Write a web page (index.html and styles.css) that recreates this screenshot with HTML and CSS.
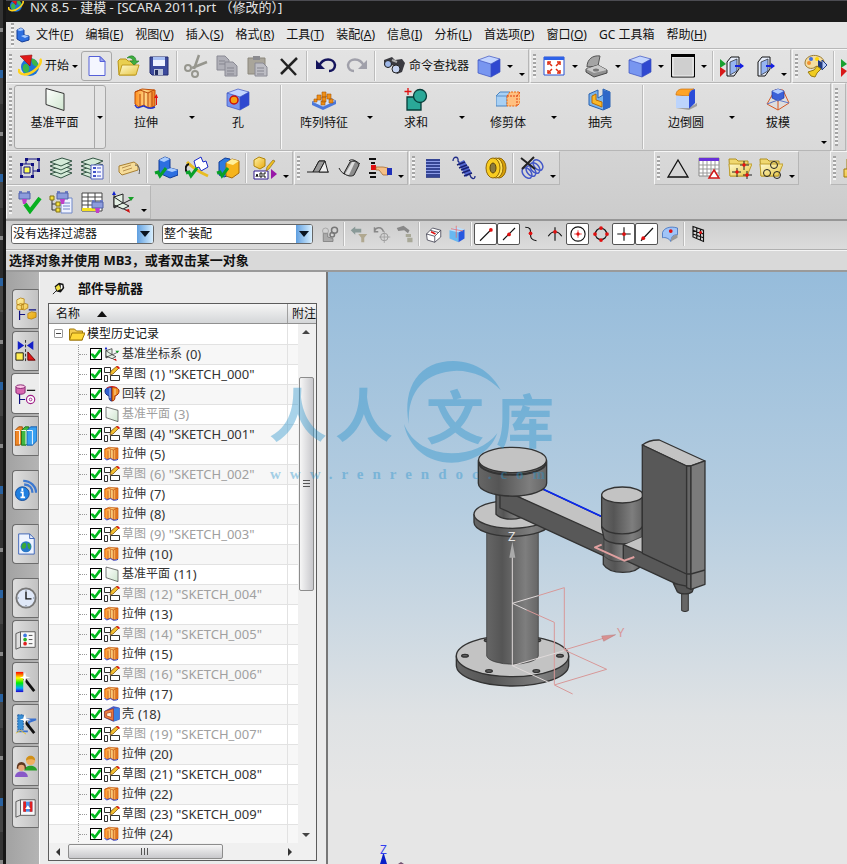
FILE: index.html
```html
<!DOCTYPE html>
<html lang="zh-CN">
<head>
    <meta charset="UTF-8">
    <meta name="viewport" content="width=device-width, initial-scale=1.0">
    <title>NX 8.5 - 建模</title>
    <link rel="stylesheet" href="styles.css">
</head>
<body>
    <!-- Icon set -->
    <svg class="sprite" aria-hidden="true">
        <defs>
            <linearGradient id="gGold" x1="0" y1="0" x2="1" y2="1"><stop offset="0" stop-color="#fff3a8"/><stop offset="1" stop-color="#e8a80c"/></linearGradient>
            <linearGradient id="gFolder" x1="0" y1="0" x2="1" y2="1"><stop offset="0" stop-color="#fffbd0"/><stop offset="1" stop-color="#e6c440"/></linearGradient>
            <linearGradient id="gOrange" x1="0" y1="0" x2="1" y2="0"><stop offset="0" stop-color="#ff8c1a"/><stop offset=".5" stop-color="#ffd98a"/><stop offset="1" stop-color="#f07818"/></linearGradient>
            <linearGradient id="gPlane" x1="0" y1="0" x2="1" y2="1"><stop offset="0" stop-color="#fff"/><stop offset="1" stop-color="#cfe6cf"/></linearGradient>
            <linearGradient id="gMetal" x1="0" y1="0" x2="1" y2="0"><stop offset="0" stop-color="#666"/><stop offset=".3" stop-color="#555"/><stop offset=".75" stop-color="#7e7e7e"/><stop offset="1" stop-color="#666"/></linearGradient>
            <linearGradient id="gRain" x1="0" y1="0" x2="0" y2="1"><stop offset="0" stop-color="#f00"/><stop offset=".3" stop-color="#ff0"/><stop offset=".55" stop-color="#0e0"/><stop offset=".8" stop-color="#0af"/><stop offset="1" stop-color="#20c"/></linearGradient>
        </defs>
        <symbol id="nx" viewBox="0 0 24 24"><circle cx="12" cy="13" r="9" fill="#1d74d8"/><path d="M5 12c2-4 5-2 6 1s-1 6-3 6-4-4-3-7zM13 5c4-1 7 3 7 7-3 1-5-1-6-3z" fill="#3cb648"/><path d="M1 15c-1 7 9 7 16 1 5-4 7-9 5-11" fill="none" stroke="#ffd21c" stroke-width="2.500"/><path d="M2 2l12-1-2 11z" fill="#e01818" stroke="#901010" stroke-width=".6"/></symbol>
        <symbol id="part" viewBox="0 0 16 16"><path d="M2 3l4-2 3 2v5l5 1v4l-7 2-5-3z" fill="#2d6fe0" stroke="#123c98"/><path d="M2 3l3 1 4-1-3-2zM6 9l3-1 5 1-4 2z" fill="#a8ccff"/></symbol>
        <symbol id="new" viewBox="0 0 24 24"><path d="M4 2.500h11l5 5v14H4z" fill="#f4f6ff" stroke="#5560d8"/><path d="M15 2.500v5h5z" fill="#9aa4f0" stroke="#5560d8"/></symbol>
        <symbol id="open" viewBox="0 0 24 24"><path d="M2 7l2-2h6l2 2h7v14H3z" fill="#e9cf50" stroke="#b89418"/><path d="M6 11h17l-3 10H3z" fill="url(#gFolder)" stroke="#c09c20"/><path d="M11 4c4-4 9-2 9 3h3l-5 4-4-4h3c0-2-3-4-6-3z" fill="#3fae3f" stroke="#1f7a28" stroke-width=".6"/></symbol>
        <symbol id="save" viewBox="0 0 24 24"><path d="M3 3h18v18H5l-2-2z" fill="#3c4a9c" stroke="#222c70"/><path d="M6 3h12v9H6z" fill="#eef2ff"/><path d="M6 3h12v3H6z" fill="#a8c0f4"/><path d="M7 15h9v6H7z" fill="#b9c2d8"/><path d="M8 16h3v5H8z" fill="#222c60"/></symbol>
        <symbol id="cut" viewBox="0 0 24 24"><g fill="none" stroke="#96968e" stroke-width="2.500"><path d="M15 1l-5 14M23 8L8 14"/><circle cx="4" cy="14" r="3" stroke-width="2"/><circle cx="11" cy="20" r="3" stroke-width="2"/></g></symbol>
        <symbol id="copy" viewBox="0 0 24 24"><g fill="#b0b0b8" stroke="#8a8a94"><path d="M2 2h8l4 4v10H2z"/><path d="M10 8h8l4 4v10H10z"/></g><path d="M4 7h6M4 10h6M12 14h7M12 17h7M12 20h7" stroke="#85858f"/></symbol>
        <symbol id="paste" viewBox="0 0 24 24"><path d="M2 4h17v16H2z" fill="#a9a59a" stroke="#8c887c"/><path d="M7 2h7v4H7z" fill="#8b8b90"/><path d="M9 9h8l4 4v9H9z" fill="#bdbdc4" stroke="#8a8a94"/><path d="M11 14h7M11 17h7M11 20h7" stroke="#85858f"/></symbol>
        <symbol id="del" viewBox="0 0 24 24"><path d="M4 5l15 16M20 4L4 20" stroke="#222" stroke-width="2.500" fill="none"/></symbol>
        <symbol id="undo" viewBox="0 0 24 24"><path d="M5 12c4-9 15-8 16-1 0 4-3 6-6 6" fill="none" stroke="#14145c" stroke-width="2.500"/><path d="M2 6v9h9z" fill="#14145c"/></symbol>
        <symbol id="redo" viewBox="0 0 24 24"><path d="M19 12C15 3 4 4 3 11c0 4 3 6 6 6" fill="none" stroke="#a0a0aa" stroke-width="2.500"/><path d="M22 6v9h-9z" fill="#a0a0aa"/></symbol>
        <symbol id="find" viewBox="0 0 24 24"><path d="M2 6l8-3 3 3 7-1 3 4-3 9-5 2-3-4-1-5-5 3-4-3z" fill="#3a3a40"/><circle cx="6" cy="10" r="3.500" fill="#9fb8e8" stroke="#222"/><circle cx="14" cy="15" r="4" fill="#c4d2f0" stroke="#222"/><path d="M10 6l5 2" stroke="#aaa" stroke-width="2"/></symbol>
        <symbol id="cube" viewBox="0 0 24 24"><path d="M1 6l11-4 11 3-9 5z" fill="#c3d5ff"/><path d="M1 6l13 4v13L1 19z" fill="#7896f0"/><path d="M14 10l9-5v13l-9 5z" fill="#2f48d0"/><path d="M1 6l11-4 11 3v13l-9 5-13-4zM1 6l13 4 9-5M14 10v13" fill="none" stroke="#3a50c0" stroke-width=".7"/></symbol>
        <symbol id="fit" viewBox="0 0 24 24"><path d="M2 3h20v18H2z" fill="#fff" stroke="#2850d0"/><path d="M2 3h20v3H2z" fill="#2e62e8"/><g stroke="#e02c10" stroke-width="1.500" fill="none"><path d="M6 8l4 4M18 8l-4 4M6 19l4-4M18 19l-4-4"/><path d="M6 11V8h3M15 8h3v3M6 16v3h3M15 19h3v-3"/></g></symbol>
        <symbol id="view" viewBox="0 0 24 24"><path d="M2 13C2 5 8 1 15 2l-2 10z" fill="#a4a4a4" stroke="#555"/><path d="M1 15l12-4 9 5v3l-13 4-8-5z" fill="#909090" stroke="#484848"/><path d="M1 15l12-4 9 5-13 3z" fill="#c9c9c9"/><ellipse cx="11" cy="16" rx="3" ry="1.500" fill="#777"/></symbol>
        <symbol id="square" viewBox="0 0 24 24"><path d="M.500 1h23v22H.500z" fill="#cfcfcf" stroke="#000"/><path d="M2 3h20v19H2z" fill="none" stroke="#fff" stroke-width=".7"/><path d="M0 0h24v3H0z"/></symbol>
        <symbol id="clip" viewBox="0 0 24 24"><path d="M7 8l4-5h8v12l-5 7H7z" fill="#e7eefc" stroke="#111"/><path d="M10 8l7-3v12l-7 4z" fill="#96b4f0" stroke="#222" stroke-width=".7"/><path d="M15 12h8" stroke="#1420e0" stroke-width="2"/><path d="M20 9l4 3-4 3z" fill="#1420e0"/></symbol>
        <symbol id="clipmark" viewBox="0 0 24 24"><path d="M0 5l6 5-6 4z" fill="#18a030"/><path d="M0 13l6 4-6 6z" fill="#d81818"/></symbol>
        <symbol id="palette" viewBox="0 0 24 24"><path d="M1 9C1 3 8 0 14 2c7 2 8 9 3 11-3 1-4-2-6 0-3 3-10 1-10-4z" fill="#f4dda0" stroke="#9a7b30"/><circle cx="7" cy="5" r="2" fill="#3f70e0"/><circle cx="13" cy="5" r="2" fill="#ffd800"/><circle cx="5" cy="9" r="2" fill="#f09030"/><path d="M14 6l5 3v5l-5 3z" fill="#203a80"/><path d="M18 6l5 5-5 5z" fill="#b8ccf8" stroke="#203a80"/><path d="M13 12l-3 4-6 2 3 4 4 1 2-4 4-4z" fill="#f0cc20" stroke="#9a7b10"/></symbol>
        <symbol id="plane" viewBox="0 0 24 24"><path d="M3 1.500l18 5v17l-18-6z" fill="url(#gPlane)" stroke="#333"/></symbol>
        <symbol id="extrude" viewBox="0 0 24 24"><path d="M1 5l7-3 13 1v16l-7 2-4-3-5 2-4-3z" fill="url(#gOrange)" stroke="#c05008"/><path d="M1 5l5-2 8 3 6-3M6 7v13M10 5v13M14 6v15M18 5v14" fill="none" stroke="#b84808"/><path d="M1 18c3 6 7 0 9 1s5 4 11 1" fill="none" stroke="#2436c8" stroke-width="1.500"/></symbol>
        <symbol id="uparrow" viewBox="0 0 24 24"><path d="M22.500 18V8" stroke="#e01010" fill="none"/><path d="M20 11l2.500-4L24 11z" fill="#e01010"/></symbol>
        <symbol id="hole" viewBox="0 0 24 24"><use href="#cube"/><circle cx="8" cy="13" r="4" fill="#f8a010" stroke="#c81010" stroke-width="1.500"/></symbol>
        <symbol id="pattern" viewBox="0 0 24 24"><path d="M0 15l14-6 10 5v3l-13 6-11-5z" fill="#4a78dc"/><path d="M0 15l14-6 10 5-13 6z" fill="#cfe2ff" stroke="#4a70c8" stroke-width=".7"/><g fill="#f09018" stroke="#a85808" stroke-width=".6"><path d="M10 5h4v5h-4zM5 8h4v5H5zM15 7h4v5h-4zM10 10h4v5h-4zM2 12h3v3H2zM17 12h4v4h-4zM9 14h4v4H9z"/></g></symbol>
        <symbol id="unite" viewBox="0 0 24 24"><path d="M3 10h14v13H3z" fill="#2aa898" stroke="#063c38" stroke-width="1.300"/><circle cx="16" cy="9" r="6.500" fill="#2aa898" stroke="#063c38" stroke-width="1.300"/><path d="M4 1v7M.500 4.500h7" stroke="#e01010" stroke-width="1.300"/></symbol>
        <symbol id="trim" viewBox="0 0 24 24"><path d="M0 9l4-4h10v11l-3 3H0z" fill="#a8d0f4" stroke="#4a84c0"/><path d="M0 9h11v10" fill="none" stroke="#5a90c8"/><path d="M11 9l3-4h10v11l-3 3H11z" fill="#ffc080" stroke="#e86810" stroke-dasharray="2 1"/><path d="M11 9h10v10M21 9l3-4" fill="none" stroke="#e04010" stroke-dasharray="2 1"/></symbol>
        <symbol id="shell" viewBox="0 0 24 24"><path d="M1 7l9-4v8l5-3V2l7 3v15l-7 3-14-5z" fill="#78b4ec" stroke="#2860b0"/><path d="M4 9l4-2v6l6 2v5L4 16z" fill="#f8b828" stroke="#b86a08"/><path d="M15 3l7 2v15l-7 3z" fill="#2e68c8"/></symbol>
        <symbol id="shelled" viewBox="0 0 24 24"><path d="M1 8l13-7 9 2v17l-9 3-13-6z" fill="#4a60d8" stroke="#2030a0"/><path d="M1 8l13-4v18L1 17z" fill="#f08040" stroke="#a03010"/><path d="M4 11l7-2v8l-7-2z" fill="#fff0d8" stroke="#a03010"/><path d="M15 4l8-1v17l-8 3z" fill="#3c80e0"/></symbol>
        <symbol id="blend" viewBox="0 0 24 24"><path d="M2 8c0-4 3-6 6-6h12c-4 1-5 3-5 7z" fill="#ffa428" stroke="#c87010" stroke-width=".7"/><path d="M2 9h13v12H2z" fill="#bcd4fc"/><path d="M15 9c0-4 2-6 6-7v14l-6 6z" fill="#2a4cd8"/><path d="M2 21h13l8-5v3l-8 4z" fill="#777" opacity=".6"/></symbol>
        <symbol id="draft" viewBox="0 0 24 24"><path d="M1 17L9 3h8l6 13-11 7zM12 23V12" fill="none" stroke="#d85820"/><path d="M6 4l6-2 6 2v7l-6 3-6-3z" fill="#3c62d8" stroke="#2038a0" stroke-width=".7"/><path d="M6 4l6-2 6 2-6 3z" fill="#b0ccff"/><path d="M1 17l11-4 11 3" fill="none" stroke="#6078c8"/></symbol>
        <symbol id="group" viewBox="0 0 24 24"><path d="M8 3h13v12H8z" fill="none" stroke="#101080"/><path d="M3 8h12v13H3z" fill="#d8d8d8" stroke="#101080"/><path d="M6 11h6v6H6z" fill="#ffff50" stroke="#101080"/><path d="M7 2h3v3H7zM19 2h3v3h-3zM19 13h3v3h-3zM2 7h3v3H2zM13 7h3v3h-3zM2 19h3v3H2zM13 19h3v3h-3z" fill="#101080"/></symbol>
        <symbol id="layers" viewBox="0 0 24 24"><g fill="#d4ead8" stroke="#335544"><path d="M1 18l12-4 10 3-11 5z"/><path d="M1 14l12-4 10 3-11 5z"/><path d="M1 10l12-4 10 3-11 5z"/><path d="M1 6l12-4 10 3-11 5z"/></g></symbol>
        <symbol id="layerset" viewBox="0 0 24 24"><use href="#layers"/><path d="M11 9h12v14H11z" fill="#f4f6ff" stroke="#5060b8"/><path d="M13 11h3v2h-3zM13 15h3v2h-3zM13 19h3v2h-3z" fill="#4050c8"/><path d="M17 12h4M17 16h4M17 20h4" stroke="#4050c8"/></symbol>
        <symbol id="tag" viewBox="0 0 24 24"><path d="M2 10l15-4 4 3v5L5 19l-3-3z" fill="#f6dc98" stroke="#a88034"/><path d="M5 12l9-3M6 15l9-3" stroke="#b89050"/><path d="M18 9c5 0 5 6 4 9" fill="none" stroke="#555"/></symbol>
        <symbol id="chk" viewBox="0 0 24 24"><path d="M1 17l3-1 2 4 6-8" fill="none" stroke="#08a028" stroke-width="3"/></symbol>
        <symbol id="seat" viewBox="0 0 24 24"><path d="M5 4l6-3 5 2v9l8 2v5l-8 3-11-5z" fill="#2d6fe0" stroke="#123c98"/><path d="M5 4l5 2 6-3-5-2zM12 14l5-2 7 2-6 2z" fill="#a8ccff"/></symbol>
        <symbol id="boxes" viewBox="0 0 24 24"><path d="M3 6l6-4 5 1v16l-6 2-5-2z" fill="#2d7ae0" stroke="#123c98"/><path d="M10 7l6-4 7 2v12l-7 5-6-2z" fill="#f6b41c" stroke="#a86c08"/><path d="M10 7l6-4 7 2-6 4z" fill="#fff09c"/></symbol>
        <symbol id="sweep" viewBox="0 0 24 24"><path d="M9 5l7-4 2 5 3-1 2 6-7 4-2-4-3 1z" fill="#fff" stroke="#1828c8"/><path d="M2 6c4 4 12 10 21 14" stroke="#e8bc20" stroke-width="3" fill="none"/><path d="M4 8c-4 1-4 6-2 8" fill="none" stroke="#111" stroke-width="2"/></symbol>
        <symbol id="abc" viewBox="0 0 24 24"><path d="M1 4l5-3 6 2v7l-5 3-6-3z" fill="url(#gGold)" stroke="#b08408"/><path d="M1 15h14v8H1z" fill="#fff" stroke="#301890"/><path d="M3 21l1-3 1 3M7 17v4h2v-4zM13 17h-2v4h2" fill="none" stroke="#111"/><path d="M22 5l-6 8-3 2 1-4 6-7z" fill="#f0c020" stroke="#806010" stroke-width=".6"/><path d="M18 13l6 5-6 5z" fill="#9818a8"/></symbol>
        <symbol id="surf" viewBox="0 0 24 24"><path d="M1 16h6l6-11h6l-6 11h10" fill="#ccc" stroke="#222"/><path d="M7 16l6-11h6l-6 11z" fill="#999" stroke="#222"/><path d="M13 16l6-11 3 11z" fill="#eee" stroke="#222"/></symbol>
        <symbol id="surf2" viewBox="0 0 24 24"><path d="M2 12c4 8 10 9 16 3M12 5c3-3 7 0 11 3" fill="none" stroke="#222"/><path d="M7 17l6-11c4-2 7-1 9 3l-5 10c-3 2-7 1-10-2z" fill="#8c8c8c" stroke="#222"/><path d="M8 18l7-12h3l-6 13z" fill="#ddd"/></symbol>
        <symbol id="hand" viewBox="0 0 24 24"><path d="M1 3h7M3 7h4M1 17h7M2 21h6" stroke="#111" stroke-width="2"/><path d="M3 9h5v5H3z" fill="#e01010"/><path d="M8 11h7l5 1v7h-5l-4-5H8z" fill="#f4c088" stroke="#a06020" stroke-width=".7"/><path d="M19 12h5v7h-5z" fill="#2030b8"/></symbol>
        <symbol id="spring" viewBox="0 0 24 24"><path d="M5 3h14v18H5z" fill="#8c9ce8"/><path d="M5 4h14M5 7h14M5 10h14M5 13h14M5 16h14M5 19h14M5 21h14" stroke="#182878" stroke-width="1.500"/></symbol>
        <symbol id="spring2" viewBox="0 0 24 24"><path d="M1 5c0-5 6-5 5 0l12 14c1 4 5 5 5 1" fill="none" stroke="#202c88" stroke-width="1.300"/><path d="M6 7l6-3 8 13-6 4z" fill="#5468d0"/><path d="M5 9l8-3M7 12l8-3M9 14l8-3M10 17l8-3M12 20l8-3" stroke="#182070" stroke-width="1.500"/></symbol>
        <symbol id="ring" viewBox="0 0 24 24"><ellipse cx="16" cy="12" rx="7" ry="10" fill="#d8a008" stroke="#906808"/><ellipse cx="13" cy="12" rx="7" ry="10" fill="#ffe050" stroke="#906808"/><ellipse cx="10" cy="12" rx="7" ry="10" fill="#f8cc20" stroke="#906808"/><ellipse cx="10" cy="12" rx="3" ry="5" fill="#8a7a40" stroke="#604808"/></symbol>
        <symbol id="unspring" viewBox="0 0 24 24"><g fill="none" stroke="#4458c8" stroke-width="1.500"><ellipse cx="7" cy="17" rx="4" ry="6" transform="rotate(-40 7 17)"/><ellipse cx="11" cy="15" rx="4" ry="6" transform="rotate(-40 11 15)"/><ellipse cx="15" cy="12" rx="4" ry="6" transform="rotate(-40 15 12)"/><ellipse cx="18" cy="9" rx="4" ry="6" transform="rotate(-40 18 9)"/></g><path d="M1 2l14 11M14 1L2 13" stroke="#222" stroke-width="2"/></symbol>
        <symbol id="tri" viewBox="0 0 24 24"><path d="M12 4l10 17H2z" fill="none" stroke="#111" stroke-width="1.300"/></symbol>
        <symbol id="gridtri" viewBox="0 0 24 24"><path d="M2 2h20v18H2z" fill="#fff" stroke="#888"/><path d="M2 9h20M2 13h20M2 17h20M6 5v15M10 5v15M14 5v15M18 5v15" stroke="#999"/><path d="M2 2h20v3H2z" fill="#6830d8"/><path d="M17 14l5 8H12z" fill="#fff" stroke="#d01818" stroke-width="1.500"/></symbol>
        <symbol id="folder" viewBox="0 0 24 24"><path d="M1 3h7l2 2h10v15H2z" fill="#f0d870" stroke="#b09020"/><path d="M1 8h23l-5 12H2z" fill="url(#gFolder)" stroke="#c0a030"/></symbol>
        <symbol id="folderpts" viewBox="0 0 24 24"><use href="#folder"/><path d="M16 5v9M12 9h9M9 12v9M4 16h9M19 15v8M15 19h9" stroke="#222"/><g fill="#f01010"><circle cx="16" cy="9" r="1.700"/><circle cx="9" cy="16" r="1.700"/><circle cx="19" cy="19" r="1.700"/></g></symbol>
        <symbol id="foldercir" viewBox="0 0 24 24"><use href="#folder"/><g fill="none" stroke="#222"><circle cx="15" cy="9" r="3.500"/><circle cx="8" cy="17" r="3.500"/><circle cx="18" cy="19" r="3.500"/></g></symbol>
        <symbol id="goldpart" viewBox="0 0 24 24"><path d="M5 3h10v9h6v9H2v-8h3z" fill="url(#gGold)" stroke="#a07808"/></symbol>
        <symbol id="plug" viewBox="0 0 24 24"><path d="M1 1h3v4H1zM9 1h3v4H9z" fill="#7080c8"/><path d="M1 3h11v6H1z" fill="#8c9cdc" stroke="#5060a8"/><path d="M4 9h5l-1 5H5z" fill="#c040c8"/></symbol>
        <symbol id="plugok" viewBox="0 0 24 24"><use href="#plug"/><path d="M7 14l5 7L22 8" fill="none" stroke="#08b020" stroke-width="4"/></symbol>
        <symbol id="plugtree" viewBox="0 0 24 24"><path d="M12 8h11v15H12z" fill="#eef2ff" stroke="#7088c8"/><path d="M14 13h7M14 16h7M14 19h7" stroke="#7088c8"/><use href="#plug" x="7"/><path d="M3 8v12h5M3 14h5" fill="none" stroke="#333"/><path d="M1 6h4v4H1zM7 12h4v4H7zM7 18h4v4H7z" fill="#f4e040" stroke="#807010"/></symbol>
        <symbol id="plugtable" viewBox="0 0 24 24"><path d="M2 3h20v18H2z" fill="#fff" stroke="#444"/><path d="M2 18h14v3H2z" fill="#f4e020"/><path d="M2 7h20M2 11h20M2 15h20M8 3v15M15 3v12" stroke="#444"/><use href="#plug" x="11" y="9"/></symbol>
        <symbol id="csys" viewBox="0 0 24 24"><path d="M3 3v15M3 18l18-9M3 14l14 7" fill="none" stroke="#222"/><path d="M3 7l9-3v9l-9 4zM3 7l9 6 6 3-6 3-9-4" fill="#e4f0e4" stroke="#222"/><path d="M1 5l2-4 2 4z" fill="#1020d0"/><path d="M17 7h6l-3 4z" fill="#18a028"/><path d="M14 20l4-1 1 4z" fill="#d01010"/></symbol>
        <symbol id="links" viewBox="0 0 24 24"><g fill="#aaa" stroke="#777"><path d="M3 11h6v5l7 2v4H3z"/><circle cx="18" cy="7" r="4" fill="none" stroke-width="2"/><circle cx="15" cy="13" r="3" fill="none" stroke-width="2"/></g><circle cx="6" cy="8" r="4" fill="none" stroke="#999"/></symbol>
        <symbol id="filterback" viewBox="0 0 24 24"><path d="M1 7l6-5v3h8v5H7v3z" fill="#8a9a98"/><path d="M11 12h12l-4 5v6h-4v-6z" fill="#b0a890"/></symbol>
        <symbol id="target" viewBox="0 0 24 24"><path d="M2 8c2-6 10-6 12 1M2 3v6h5" fill="none" stroke="#888" stroke-width="2"/><circle cx="15" cy="16" r="5" fill="none" stroke="#888"/><path d="M15 8v16M8 16h15" stroke="#999"/></symbol>
        <symbol id="drill" viewBox="0 0 24 24"><path d="M1 4l9-3 8 6-2 4-5-4-8 1z" fill="#888"/><path d="M13 12h7v4h-7zM15 17h7v6h-7z" fill="#a8a898"/></symbol>
        <symbol id="facet" viewBox="0 0 24 24"><path d="M2 12l8-8 11 3v9l-8 7-10-3z" fill="#fff" stroke="#334"/><path d="M2 12l11 3 8-8M13 15v8M7 7l11 3" fill="none" stroke="#334"/><path d="M8 9l6 3" stroke="#e01010" stroke-width="2"/></symbol>
        <symbol id="cube2" viewBox="0 0 24 24"><path d="M2 7l10-4 10 3-8 4z" fill="#b8e0ff"/><path d="M2 7l12 3v13L2 18z" fill="#68b8f0"/><path d="M14 10l8-4v12l-8 5z" fill="#2858e0"/><path d="M11 1v16M4 5l16 3" stroke="#e86868"/></symbol>
        <symbol id="pEnd" viewBox="0 0 24 24"><path d="M4 21L19 6" stroke="#111" stroke-width="1.500"/><circle cx="18.500" cy="6.500" r="2.500" fill="#e01010"/></symbol>
        <symbol id="pMid" viewBox="0 0 24 24"><path d="M4 20L20 4" stroke="#111" stroke-width="1.500"/><circle cx="12" cy="12.500" r="2.500" fill="#e01010"/></symbol>
        <symbol id="pCtl" viewBox="0 0 24 24"><path d="M3 3c8 0 7 4 7 9s1 8 8 9" fill="none" stroke="#111" stroke-width="1.500"/><circle cx="10" cy="11" r="2.500" fill="#e01010"/></symbol>
        <symbol id="pInt" viewBox="0 0 24 24"><path d="M12 3v18M3 15c5-8 13-8 18 0" fill="none" stroke="#111" stroke-width="1.500"/><circle cx="12" cy="9" r="2.500" fill="#e01010"/></symbol>
        <symbol id="pCen" viewBox="0 0 24 24"><circle cx="12" cy="12" r="9.500" fill="none" stroke="#111" stroke-width="1.500"/><path d="M12 7v10M7 12h10" stroke="#e01010"/><circle cx="12" cy="12" r="2.200" fill="#e01010"/></symbol>
        <symbol id="pQuad" viewBox="0 0 24 24"><circle cx="12" cy="12" r="7.500" fill="none" stroke="#111" stroke-width="1.500"/><g fill="#e01010"><circle cx="12" cy="4" r="2.500"/><circle cx="12" cy="20" r="2.500"/><circle cx="4" cy="12" r="2.500"/><circle cx="20" cy="12" r="2.500"/></g></symbol>
        <symbol id="pPt" viewBox="0 0 24 24"><path d="M12 3v18M3 12h18" stroke="#111" stroke-width="1.500"/><circle cx="12" cy="12" r="2.500" fill="#e01010"/></symbol>
        <symbol id="pOn" viewBox="0 0 24 24"><path d="M4 21L20 4" stroke="#111" stroke-width="1.500"/><circle cx="7" cy="17.500" r="2.500" fill="#e01010"/></symbol>
        <symbol id="pFace" viewBox="0 0 24 24"><path d="M2 10C4 4 12 1 22 4v9c-7 0-8 3-9 9-2-4-7-6-11-5z" fill="#a0c4f8" stroke="#3868b8"/><path d="M13 22c1-6 3-9 9-9v4z" fill="#999"/><circle cx="13" cy="8" r="2.500" fill="#e01010"/></symbol>
        <symbol id="pGrid" viewBox="0 0 24 24"><path d="M4 2l14 5v15L4 16zM9 4v14M14 5v15M4 7l14 5M4 12l14 5" fill="none" stroke="#111" stroke-width="1.500"/><circle cx="14" cy="10" r="2" fill="#e01010"/></symbol>
        <symbol id="asm" viewBox="0 0 24 24"><g fill="url(#gGold)" stroke="#b07808" stroke-width=".8"><path d="M2 2l4-2 4 1v5l-4 2-4-1zM2 8l4-2 3 1v5l-4 1-3-1zM7 8l4-2 3 1v4l-4 2-3-1zM14 17l4-2 5 1v5l-5 2-4-1z"/></g><path d="M5 14v10M5 18h6M15 13h8" fill="none" stroke="#101080" stroke-width="1.300"/></symbol>
        <symbol id="constraint" viewBox="0 0 24 24"><path d="M3 1l7 5-7 5zM20 1l-7 5 7 5z" fill="#1420c8"/><path d="M11.500 0v24" stroke="#222" stroke-dasharray="3 2"/><path d="M1 14h8v8H1z" fill="#ffee50" stroke="#111"/><path d="M14 13l8 9h-8z" fill="#e01818" stroke="#600"/></symbol>
        <symbol id="partnav" viewBox="0 0 24 24"><path d="M1 4v6c0 3 10 3 10 0V4" fill="#d868b0" stroke="#80206c"/><ellipse cx="6" cy="4" rx="5" ry="2" fill="#ffc8e8" stroke="#80206c"/><path d="M13 8h9" stroke="#111" stroke-width="1.300"/><path d="M5 12v11M5 18h6" stroke="#101080" stroke-width="1.300" fill="none"/><circle cx="17" cy="18" r="4.500" fill="#fff" stroke="#a02088" stroke-width="1.300"/><circle cx="17" cy="18" r="1.500" fill="none" stroke="#a02088"/></symbol>
        <symbol id="books" viewBox="0 0 24 24"><path d="M0 6l4-4h4v17l-3 3H0z" fill="#f08828" stroke="#984808"/><path d="M7 6l4-4h4v17l-3 3H7z" fill="#40b840" stroke="#187018"/><path d="M13 6l4-4h7v15l-5 5h-6z" fill="#38a0f0" stroke="#1058a8"/><path d="M0 6h5v15M7 6h5v15M13 6h6v15" fill="none" stroke="#fff"/></symbol>
        <symbol id="info" viewBox="0 0 24 24"><path d="M9 2c8 0 14 6 14 13M10 6c6 0 9 4 9 9" fill="none" stroke="#3c78d0" stroke-width="2.500"/><circle cx="8" cy="16" r="7.500" fill="#2080e0" stroke="#104898"/><path d="M8 10v3M6 14.500h2.500v5M6 20h5" stroke="#fff" stroke-width="2" fill="none"/></symbol>
        <symbol id="web" viewBox="0 0 24 24"><path d="M4 1h12l5 5v17H4z" fill="#eef4ff" stroke="#3860b8"/><path d="M16 1v5h5" fill="none" stroke="#3860b8"/><circle cx="12" cy="15" r="6" fill="#2878c8"/><path d="M8 12c3-3 5 0 4 3s-5 3-5 0zM14 11c3 0 4 4 2 7-2-1-3-5-2-7z" fill="#38a838"/></symbol>
        <symbol id="clock" viewBox="0 0 24 24"><circle cx="12" cy="12" r="10.500" fill="#dfe8f8" stroke="#777" stroke-width="2"/><path d="M12 5v8h6" fill="none" stroke="#111" stroke-width="1.500"/><path d="M12 3v1M12 20v1M3 12h1M20 12h1" stroke="#345"/></symbol>
        <symbol id="roles" viewBox="0 0 24 24"><path d="M1 5l5-2v17l-5 2z" fill="#ddd" stroke="#555"/><path d="M6 3h16v17H6z" fill="#f8f8f8" stroke="#555"/><circle cx="11" cy="7" r="2" fill="#3c78e0"/><circle cx="11" cy="11.500" r="2" fill="#28b028"/><circle cx="11" cy="16" r="2" fill="#e02020"/><path d="M15 7h4M15 11.500h4M15 16h4" stroke="#444"/></symbol>
        <symbol id="wand" viewBox="0 0 24 24"><path d="M9 8l11 14" stroke="#111" stroke-width="3"/><path d="M10 1l1 5 5 1-5 1-1 5-2-5-4-1 4-1z" fill="#fff"/></symbol>
        <symbol id="rainbow" viewBox="0 0 24 24"><path d="M1 1h8v22H1z" fill="url(#gRain)"/><use href="#wand" x="1"/></symbol>
        <symbol id="motion" viewBox="0 0 24 24"><path d="M3 2h6v16H3z" fill="#3890d8" stroke="#1858a0" stroke-dasharray="2 1"/><path d="M2 20h12M10 7h13l-8 3v6" fill="none" stroke="#3870d0" stroke-width="2"/><path d="M1 22l5-3 6 4" stroke="#e0c030" fill="none"/><use href="#wand" x="1"/></symbol>
        <symbol id="people" viewBox="0 0 24 24"><path d="M10 17c0-7 14-7 14 0z" fill="#28a028"/><circle cx="17" cy="6" r="5" fill="#f0b060"/><path d="M12 6c0-7 10-7 10 0-3-2-7-2-10 0z" fill="#d09018"/><path d="M0 24c0-8 14-8 14 0z" fill="#8858c8"/><path d="M2 15c-1-10 11-10 10 0z" fill="#603820"/><circle cx="7" cy="14" r="3.500" fill="#e8a878"/></symbol>
        <symbol id="scene" viewBox="0 0 24 24"><path d="M1 5l5-2v17l-5 2z" fill="#ddd" stroke="#555"/><path d="M6 3h16v17H6z" fill="#f8f8f8" stroke="#555"/><path d="M9 5h10v11H9z" fill="#4890e8"/><path d="M9 5h3v11H9zM16 5h3v11h-3z" fill="#e02020"/><path d="M11 13l3-4 3 4z" fill="#fff"/></symbol>
        <symbol id="pin" viewBox="0 0 16 16"><path d="M1 15l5-5" stroke="#111"/><path d="M3 6l5-4 5 1 1 5-4 5-5-1z" fill="#111"/><path d="M4 7l4-3 2 5-4 2z" fill="#f0e040"/><path d="M10 4l2 1v3l-2 2z" fill="#fff"/></symbol>
        <symbol id="sketch" viewBox="0 0 16 16"><g fill="#fff" stroke="#333"><path d="M.500 1.500h6v5h-6zM6.500 9.500h9v5h-9z"/><path d="M.500 15.500v-6h3v6z"/></g><path d="M6 9l1-4 6-5 2 2-6 6z" fill="#f4c030" stroke="#6a4408" stroke-width=".7"/><path d="M12 1l2-1 2 2-1 1z" fill="#e01818"/></symbol>
        <symbol id="revolve" viewBox="0 0 16 16"><path d="M1 5c0-3 4-4 7-4v14c-3 0-3-3-3-5C2 9 1 7 1 5z" fill="#3060d0" stroke="#183080"/><path d="M8 1c3 0 7 1 7 4 0 2-1 4-4 5 0 2 0 5-3 5z" fill="#f09020" stroke="#a02808"/><path d="M6 2v10M11 3v6" stroke="#fff" opacity=".6"/><path d="M3 2c3-2 7-2 10 0" fill="none" stroke="#d02020"/></symbol>
        <symbol id="smallfolder" viewBox="0 0 16 16"><path d="M.500 3h5l2 2h6v9H.500z" fill="#f4cc50" stroke="#a07808"/><path d="M3 7h13l-3 7H.500z" fill="#ffd838" stroke="#a07808"/></symbol>
    </svg>

    <div class="desktop"></div>
    <div class="window">
        <header class="titlebar">
            <svg class="icon-16"><use href="#nx"/></svg>
            <span>NX 8.5 - 建模 - [SCARA 2011.prt （修改的）]</span>
        </header>

        <nav class="menubar">
            <span class="grip"></span>
            <svg class="icon-16"><use href="#part"/></svg>
            <a href="#">文件(<u>F</u>)</a>
            <a href="#">编辑(<u>E</u>)</a>
            <a href="#">视图(<u>V</u>)</a>
            <a href="#">插入(<u>S</u>)</a>
            <a href="#">格式(<u>R</u>)</a>
            <a href="#">工具(<u>T</u>)</a>
            <a href="#">装配(<u>A</u>)</a>
            <a href="#">信息(<u>I</u>)</a>
            <a href="#">分析(<u>L</u>)</a>
            <a href="#">首选项(<u>P</u>)</a>
            <a href="#">窗口(<u>O</u>)</a>
            <a href="#">GC 工具箱</a>
            <a href="#">帮助(<u>H</u>)</a>
        </nav>

        <div class="dock">
            <div class="dock-row">
                <div class="bar">
                    <span class="grip"></span>
                    <button class="tool labelled"><svg class="icon"><use href="#nx"/></svg>开始</button>
                    <button class="drop" aria-label="开始菜单"></button>
                    <button class="tool hot" aria-label="新建"><svg class="icon"><use href="#new"/></svg></button>
                    <button class="tool" aria-label="打开"><svg class="icon"><use href="#open"/></svg></button>
                    <button class="tool" aria-label="保存"><svg class="icon"><use href="#save"/></svg></button>
                    <span class="sep"></span>
                    <button class="tool" aria-label="剪切"><svg class="icon"><use href="#cut"/></svg></button>
                    <button class="tool" aria-label="复制"><svg class="icon"><use href="#copy"/></svg></button>
                    <button class="tool" aria-label="粘贴"><svg class="icon"><use href="#paste"/></svg></button>
                    <button class="tool" aria-label="删除"><svg class="icon"><use href="#del"/></svg></button>
                    <span class="sep"></span>
                    <button class="tool" aria-label="撤销"><svg class="icon"><use href="#undo"/></svg></button>
                    <button class="tool" aria-label="重做"><svg class="icon"><use href="#redo"/></svg></button>
                    <span class="sep"></span>
                    <button class="tool labelled finder"><svg class="icon"><use href="#find"/></svg>命令查找器</button>
                    <button class="tool" aria-label="视图立方"><svg class="icon"><use href="#cube"/></svg></button>
                    <button class="drop" aria-label="更多视图"></button>
                    <button class="drop more" aria-label="工具条选项"></button>
                </div>
                <div class="bar">
                    <span class="grip"></span>
                    <button class="tool" aria-label="适合窗口"><svg class="icon"><use href="#fit"/></svg></button>
                    <button class="drop" aria-label="缩放选项"></button>
                    <button class="tool" aria-label="渲染样式"><svg class="icon"><use href="#view"/></svg></button>
                    <button class="drop" aria-label="渲染选项"></button>
                    <button class="tool" aria-label="定向视图"><svg class="icon"><use href="#cube"/></svg></button>
                    <button class="drop" aria-label="定向选项"></button>
                    <button class="tool" aria-label="背景"><svg class="icon"><use href="#square"/></svg></button>
                    <button class="drop" aria-label="背景选项"></button>
                    <span class="sep"></span>
                    <button class="tool" aria-label="编辑截面"><svg class="icon"><use href="#clip"/><use href="#clipmark"/></svg></button>
                    <button class="tool" aria-label="剪切截面"><svg class="icon"><use href="#clip"/></svg></button>
                    <button class="drop more" aria-label="工具条选项"></button>
                </div>
                <div class="bar open-end">
                    <span class="grip"></span>
                    <button class="tool" aria-label="编辑对象显示"><svg class="icon"><use href="#palette"/></svg></button>
                    <span class="sep"></span>
                    <button class="tool" aria-label="显示"><svg class="icon"><use href="#clipmark"/></svg></button>
                </div>
            </div>

            <div class="dock-row ribbon">
                <div class="bar">
                    <span class="grip"></span>
                    <div class="split hot">
                        <button class="feature"><svg class="icon"><use href="#plane"/></svg>基准平面</button>
                        <button class="drop" aria-label="基准选项"></button>
                    </div>
                    <button class="feature"><svg class="icon"><use href="#extrude"/><use href="#uparrow"/></svg>拉伸</button>
                    <button class="drop" aria-label="拉伸选项"></button>
                    <button class="feature"><svg class="icon"><use href="#hole"/></svg>孔</button>
                    <span class="sep"></span>
                    <button class="feature"><svg class="icon"><use href="#pattern"/></svg>阵列特征</button>
                    <button class="drop" aria-label="阵列选项"></button>
                    <button class="feature"><svg class="icon"><use href="#unite"/></svg>求和</button>
                    <button class="drop" aria-label="布尔选项"></button>
                    <button class="feature"><svg class="icon"><use href="#trim"/></svg>修剪体</button>
                    <button class="drop" aria-label="修剪选项"></button>
                    <button class="feature"><svg class="icon"><use href="#shell"/></svg>抽壳</button>
                    <span class="sep"></span>
                    <button class="feature"><svg class="icon"><use href="#blend"/></svg>边倒圆</button>
                    <button class="drop" aria-label="倒圆选项"></button>
                    <button class="feature"><svg class="icon"><use href="#draft"/></svg>拔模</button>
                    <button class="drop more" aria-label="工具条选项"></button>
                </div>
                <div class="bar open-end"><span class="grip"></span></div>
            </div>

            <div class="dock-row">
                <div class="bar">
                    <span class="grip"></span>
                    <button class="tool" aria-label="对象组"><svg class="icon"><use href="#group"/></svg></button>
                    <button class="tool" aria-label="图层"><svg class="icon"><use href="#layers"/></svg></button>
                    <button class="tool" aria-label="图层设置"><svg class="icon"><use href="#layerset"/></svg></button>
                    <span class="sep"></span>
                    <button class="tool" aria-label="标签"><svg class="icon"><use href="#tag"/></svg></button>
                    <span class="sep"></span>
                    <button class="tool" aria-label="检查部件"><svg class="icon"><use href="#seat"/><use href="#chk"/></svg></button>
                    <button class="tool" aria-label="检查草图"><svg class="icon"><use href="#sweep"/><use href="#chk"/></svg></button>
                    <button class="tool" aria-label="检查装配"><svg class="icon"><use href="#boxes"/><use href="#chk"/></svg></button>
                    <span class="sep"></span>
                    <button class="tool" aria-label="注释"><svg class="icon"><use href="#abc"/></svg></button>
                    <button class="drop more" aria-label="工具条选项"></button>
                </div>
                <div class="bar">
                    <span class="grip"></span>
                    <button class="tool" aria-label="面"><svg class="icon"><use href="#surf"/></svg></button>
                    <button class="tool" aria-label="曲面"><svg class="icon"><use href="#surf2"/></svg></button>
                    <button class="tool" aria-label="选择"><svg class="icon"><use href="#hand"/></svg></button>
                    <button class="drop more" aria-label="工具条选项"></button>
                </div>
                <div class="bar">
                    <span class="grip"></span>
                    <button class="tool" aria-label="圆柱压缩弹簧"><svg class="icon"><use href="#spring"/></svg></button>
                    <button class="tool" aria-label="圆柱拉伸弹簧"><svg class="icon"><use href="#spring2"/></svg></button>
                    <button class="tool" aria-label="碟簧"><svg class="icon"><use href="#ring"/></svg></button>
                    <span class="sep"></span>
                    <button class="tool" aria-label="删除弹簧"><svg class="icon"><use href="#unspring"/></svg></button>
                    <button class="drop more" aria-label="工具条选项"></button>
                </div>
                <div class="bar far">
                    <span class="grip"></span>
                    <button class="tool" aria-label="三角形"><svg class="icon"><use href="#tri"/></svg></button>
                    <button class="tool" aria-label="表格"><svg class="icon"><use href="#gridtri"/></svg></button>
                    <button class="tool" aria-label="点集"><svg class="icon"><use href="#folderpts"/></svg></button>
                    <button class="tool" aria-label="圆集"><svg class="icon"><use href="#foldercir"/></svg></button>
                    <button class="drop more" aria-label="工具条选项"></button>
                </div>
                <div class="bar near open-end">
                    <span class="grip"></span>
                    <button class="tool" aria-label="部件"><svg class="icon"><use href="#goldpart"/></svg></button>
                </div>
            </div>

            <div class="dock-row">
                <div class="bar">
                    <span class="grip"></span>
                    <button class="tool" aria-label="连接检查"><svg class="icon"><use href="#plugok"/></svg></button>
                    <button class="tool" aria-label="连接树"><svg class="icon"><use href="#plugtree"/></svg></button>
                    <button class="tool" aria-label="连接表"><svg class="icon"><use href="#plugtable"/></svg></button>
                    <button class="tool" aria-label="坐标系"><svg class="icon"><use href="#csys"/></svg></button>
                    <button class="drop more" aria-label="工具条选项"></button>
                </div>
            </div>
        </div>

        <div class="selectbar">
            <span class="picker filter"><select aria-label="选择过滤器"><option>没有选择过滤器</option></select></span>
            <span class="picker"><select aria-label="选择范围"><option>整个装配</option></select></span>
            <button class="snap" aria-label="关联"><svg class="icon-18"><use href="#links"/></svg></button>
            <span class="sep"></span>
            <button class="snap" aria-label="重置过滤器"><svg class="icon-18"><use href="#filterback"/></svg></button>
            <button class="snap" aria-label="目标"><svg class="icon-18"><use href="#target"/></svg></button>
            <button class="snap" aria-label="钻取"><svg class="icon-18"><use href="#drill"/></svg></button>
            <span class="sep"></span>
            <button class="snap" aria-label="小平面"><svg class="icon-18"><use href="#facet"/></svg></button>
            <button class="snap" aria-label="实体"><svg class="icon-18"><use href="#cube2"/></svg></button>
            <span class="sep"></span>
            <button class="snap on" aria-label="端点"><svg class="icon-18"><use href="#pEnd"/></svg></button>
            <button class="snap on" aria-label="中点"><svg class="icon-18"><use href="#pMid"/></svg></button>
            <button class="snap" aria-label="控制点"><svg class="icon-18"><use href="#pCtl"/></svg></button>
            <button class="snap" aria-label="交点"><svg class="icon-18"><use href="#pInt"/></svg></button>
            <button class="snap on" aria-label="圆弧中心"><svg class="icon-18"><use href="#pCen"/></svg></button>
            <button class="snap" aria-label="象限点"><svg class="icon-18"><use href="#pQuad"/></svg></button>
            <button class="snap on" aria-label="现有点"><svg class="icon-18"><use href="#pPt"/></svg></button>
            <button class="snap on" aria-label="曲线上的点"><svg class="icon-18"><use href="#pOn"/></svg></button>
            <button class="snap" aria-label="面上的点"><svg class="icon-18"><use href="#pFace"/></svg></button>
            <span class="sep"></span>
            <button class="snap" aria-label="栅格点"><svg class="icon-18"><use href="#pGrid"/></svg></button>
        </div>

        <p class="prompt">选择对象并使用 MB3，或者双击某一对象</p>

        <main class="workspace">
            <div class="resource-bar">
                <button class="tab" aria-label="装配导航器"><svg class="icon"><use href="#asm"/></svg></button>
                <button class="tab" aria-label="约束导航器"><svg class="icon"><use href="#constraint"/></svg></button>
                <button class="tab current" aria-label="部件导航器"><svg class="icon"><use href="#partnav"/></svg></button>
                <button class="tab" aria-label="重用库"><svg class="icon"><use href="#books"/></svg></button>
                <button class="tab apart" aria-label="信息"><svg class="icon"><use href="#info"/></svg></button>
                <button class="tab apart" aria-label="浏览器"><svg class="icon"><use href="#web"/></svg></button>
                <button class="tab apart" aria-label="历史记录"><svg class="icon"><use href="#clock"/></svg></button>
                <button class="tab" aria-label="角色"><svg class="icon"><use href="#roles"/></svg></button>
                <button class="tab" aria-label="可视化向导"><svg class="icon"><use href="#rainbow"/></svg></button>
                <button class="tab" aria-label="运动向导"><svg class="icon"><use href="#motion"/></svg></button>
                <button class="tab" aria-label="用户"><svg class="icon"><use href="#people"/></svg></button>
                <button class="tab" aria-label="系统场景"><svg class="icon"><use href="#scene"/></svg></button>
            </div>

            <section class="navigator">
                <h2><svg class="icon-14"><use href="#pin"/></svg>部件导航器</h2>
                <div class="tree">
                    <div class="tree-head">
                        <button class="head-name">名称<i class="sort"></i></button>
                        <button class="head-note">附注</button>
                    </div>
                    <div class="tree-body">
                        <div class="tree-rows">
                            <table>
                                <tbody id="features">
                                    <tr>
                                        <td><div class="root"><button class="expander" aria-label="折叠"></button><svg class="icon-16"><use href="#smallfolder"/></svg>模型历史记录</div></td>
                                        <td class="note"></td>
                                    </tr>
                                </tbody>
                            </table>
                        </div>
                        <div class="scroll-v"><i class="up"></i><span class="thumb"></span><i class="down"></i></div>
                    </div>
                    <div class="scroll-h"><i class="left"></i><span class="thumb"></span><i class="right"></i></div>
                </div>
            </section>

            <section class="viewport">
                <svg class="model">
                    <g transform="translate(102 148) scale(.3333)" stroke="#333" stroke-width="4" stroke-linejoin="round">
                        <!-- base plate -->
                        <path d="M79 708v28a168 62 0 0 0 337 0v-28z" fill="url(#gMetal)"/>
                        <ellipse cx="247.500" cy="708" rx="168.500" ry="62" fill="#c3c3c3"/>
                        <g fill="#666"><ellipse cx="105" cy="707" rx="10" ry="4"/><ellipse cx="390" cy="707" rx="10" ry="4"/><ellipse cx="177" cy="753" rx="10" ry="4"/><ellipse cx="319" cy="753" rx="10" ry="4"/><ellipse cx="172" cy="661" rx="9" ry="4"/><ellipse cx="323" cy="661" rx="9" ry="4"/></g>
                        <!-- column and flange -->
                        <path d="M170 330v378a78 28 0 0 0 155 0V330z" fill="url(#gMetal)" stroke-width="2"/>
                        <path d="M132 283v24a115 42 0 0 0 230 0v-24z" fill="url(#gMetal)"/>
                        <ellipse cx="247" cy="283" rx="115" ry="42" fill="#c3c3c3"/>
                        <path d="M198 215v68c15 16 50 18 76 10V215z" fill="url(#gMetal)"/>
                        <!-- first arm -->
                        <path d="M262 230l78-22 175 82 65 40-20 40-38-15z" fill="#c3c3c3"/>
                        <path d="M210 225l52 4 318 143v50l-60-15-310-143z" fill="#585858"/>
                        <path d="M340 208l178 83" stroke="#0a28f0" stroke-width="5"/>
                        <!-- head -->
                        <path d="M145 122v68a102 38 0 0 0 205 0v-68z" fill="url(#gMetal)"/>
                        <ellipse cx="247.500" cy="120" rx="102" ry="38" fill="#c3c3c3"/>
                        <path d="M147 128a100 36 0 0 0 201 0" fill="none" stroke-width="6"/>
                        <!-- motor -->
                        <path d="M520 405v28c20 32 98 32 116 0v-40z" fill="url(#gMetal)"/>
                        <path d="M522 355v52c15 20 50 22 70 10v-60z" fill="url(#gMetal)" stroke-width="2"/>
                        <path d="M515 225v97l6 28a58 22 0 0 0 116 0V225z" fill="url(#gMetal)"/>
                        <path d="M516 320c15 29 106 29 121 0" fill="none"/>
                        <ellipse cx="577" cy="225" rx="62" ry="24" fill="#c3c3c3"/>
                        <!-- second arm -->
                        <path d="M582 374l55-24v55z" fill="#c3c3c3" stroke-width="2"/>
                        <path d="M580 374l57 24 133 64 13 46-20-5-183-85z" fill="#585858"/>
                        <!-- spindle -->
                        <path d="M755 515v57q10 6 20 0v-57z" fill="#666" stroke-width="3"/>
                        <path d="M730 490l12 25c10 9 35 9 45 0l4-12z" fill="#555"/>
                        <!-- casing -->
                        <path d="M637 75q20-16 51-15l137 63-42 15h-13z" fill="#c3c3c3"/>
                        <path d="M637 75l133 63v324l-133-62z" fill="#585858"/>
                        <path d="M770 138h13v324h-13zM770 462h13v46l-13-5z" fill="#666"/>
                        <path d="M783 138l42-15v327l-42 12zM783 462l42-12v43l-42 15z" fill="#7b7b7b"/>
                        <!-- datum planes and axes -->
                        <g fill="none" stroke="#d89898" stroke-width="3">
                            <path d="M325 527l78-24v187l127 58-157 47V607l-83-37M403 690l117-35M373 795l55 27"/>
                            <path d="M515 374l-20 8 88 40 30-11" stroke="#e0a0a0" stroke-width="6"/>
                            <path d="M247 400v337l156-45M247 737l126 58M325 527l-78 23 43 20" stroke="#e0dada"/>
                        </g>
                        <path d="M247 365l-9 48h18z" fill="#aaa" stroke="none"/>
                        <path d="M557 644l-42 4 6 16z" fill="#d89090" stroke="#a86868" stroke-width="1"/>
                    </g>
                    <text x="180" y="269" class="axis-z">Z</text>
                    <text x="289" y="365" class="axis-y">Y</text>
                    <text x="52" y="582" class="triad-z">Z</text>
                    <path d="M52 592l3-10h1l3 10z" fill="#0a20c8"/>
                    <path d="M70 592l3-2 3 2z" fill="#705070"/>
                </svg>
            </section>

            <svg class="watermark" aria-hidden="true">
                <text x="9" y="106" class="brand">人</text>
                <text x="75" y="106" class="brand">人</text>
                <text x="166" y="108" class="brand">文</text>
                <text x="236" y="112" class="brand">库</text>
                <g transform="translate(0 19) scale(.3333)">
                    <path d="M447 222C425 110 480 33 580 33c70 0 120 42 142 87-32-35-82-58-132-58-90 3-150 58-143 160z"/>
                    <path d="M432 222c23 58 78 86 143 88 55 0 105-20 137-60-22 60-82 88-137 88-75 0-130-48-143-116z"/>
                </g>
                <text x="10" y="148" class="site">www.renrendoc.com</text>
            </svg>
        </main>
    </div>

    <script>
        // icon, name, number and quoted name, suppressed
        const features = [
            ["csys", "基准坐标系", "(0)"],
            ["sketch", "草图", "(1) \"SKETCH_000\""],
            ["revolve", "回转", "(2)"],
            ["plane", "基准平面", "(3)", true],
            ["sketch", "草图", "(4) \"SKETCH_001\""],
            ["extrude", "拉伸", "(5)"],
            ["sketch", "草图", "(6) \"SKETCH_002\"", true],
            ["extrude", "拉伸", "(7)"],
            ["extrude", "拉伸", "(8)"],
            ["sketch", "草图", "(9) \"SKETCH_003\"", true],
            ["extrude", "拉伸", "(10)"],
            ["plane", "基准平面", "(11)"],
            ["sketch", "草图", "(12) \"SKETCH_004\"", true],
            ["extrude", "拉伸", "(13)"],
            ["sketch", "草图", "(14) \"SKETCH_005\"", true],
            ["extrude", "拉伸", "(15)"],
            ["sketch", "草图", "(16) \"SKETCH_006\"", true],
            ["extrude", "拉伸", "(17)"],
            ["shelled", "壳", "(18)"],
            ["sketch", "草图", "(19) \"SKETCH_007\"", true],
            ["extrude", "拉伸", "(20)"],
            ["sketch", "草图", "(21) \"SKETCH_008\""],
            ["extrude", "拉伸", "(22)"],
            ["sketch", "草图", "(23) \"SKETCH_009\""],
            ["extrude", "拉伸", "(24)"]
        ];

        const body = document.getElementById("features");
        features.forEach(([icon, name, detail, faded]) => {
            const row = document.createElement("tr");
            row.innerHTML = `
                <td><label class="feature-row${faded ? " faded" : ""}">
                    <input type="checkbox" checked>
                    <svg class="icon-16"><use href="#${icon}"/></svg>${name}<span class="detail">${detail}</span>
                </label></td>
                <td class="note"></td>`;
            body.appendChild(row);
        });
    </script>
</body>
</html>
```

FILE: styles.css
```css
* {
    box-sizing: border-box;
}
body {
    margin: 0;
    height: 100vh;
    display: flex;
    overflow: hidden;
    font-family: "Noto Sans", "Noto Sans CJK SC", sans-serif;
    font-size: 12px;
    line-height: 18px;
    color: #111;
    background: #222;
}
button {
    font: inherit;
    color: inherit;
    background: none;
    border: 0;
    padding: 0;
    display: flex;
    align-items: center;
    justify-content: center;
    flex: none;
}
svg {
    flex: none;
}
.sprite {
    position: absolute;
    width: 0;
    height: 0;
}
.icon {
    width: 24px;
    height: 24px;
}
.icon-18 {
    width: 18px;
    height: 18px;
}
.icon-16 {
    width: 16px;
    height: 16px;
}
.icon-14 {
    width: 14px;
    height: 14px;
}

/* Sliver of desktop beside the window */
.desktop {
    width: 3px;
    background: repeating-linear-gradient(#333 0 28px, #888 28px 32px, #2c2c2c 32px 70px, #2a62a0 70px 78px, #444 78px 104px);
}
.window {
    flex: 1;
    min-width: 0;
    display: flex;
    flex-direction: column;
    border-left: 3px solid #161616;
    background: #d6d6d6;
}
.titlebar {
    flex: none;
    height: 22px;
    display: flex;
    gap: 6px;
    padding-left: 2px;
    overflow: hidden;
    background: #1c1c1c;
    border-top: 1px solid #4c4c52;
    color: #e4e4e4;
    font-size: 13px;
    line-height: 12px;
    white-space: nowrap;
}
.titlebar .icon-16 {
    margin-top: -4px;
}

/* Menu */
.menubar {
    flex: none;
    height: 27px;
    display: flex;
    align-items: center;
    gap: 12px;
    padding-left: 3px;
    background: #e6e6e6;
    border-bottom: 1px solid #b8b8b8;
    white-space: nowrap;
}
.menubar .icon-16 {
    margin: 0 -7px 0 -13px;
}
.menubar a {
    color: #111;
    text-decoration: none;
}

/* Toolbars */
.grip {
    flex: none;
    width: 3px;
    height: 24px;
    margin: 0 2px;
    background: repeating-linear-gradient(#a4a4a4 0 2px, #f4f4f4 2px 4px);
}
.dock {
    flex: none;
    background: linear-gradient(#e0e0e0, #cccccc);
}
.dock-row {
    display: flex;
    height: 34px;
    overflow: hidden;
}
.bar {
    flex: none;
    display: flex;
    align-items: center;
    margin-right: 1px;
    border: 1px solid #b6b6b6;
    border-left-color: #f6f6f6;
    border-top-color: #f6f6f6;
    background: rgba(255, 255, 255, .12);
}
.bar.far {
    margin-left: 93px;
}
.bar.near {
    margin-left: 30px;
}
.bar.open-end {
    flex: 1 0 auto;
}
.tool {
    width: 31px;
    height: 30px;
}
.tool.labelled {
    width: auto;
    gap: 3px;
    padding-left: 4px;
}
.tool.finder {
    padding-right: 4px;
}
.hot {
    border: 1px solid #a8a8a8;
    border-radius: 3px;
    background: #e4e4e4;
}
.sep {
    flex: none;
    align-self: stretch;
    width: 2px;
    margin: 1px 2px;
    background: linear-gradient(90deg, #bcbcbc 50%, #f8f8f8 50%);
}
.drop {
    width: 12px;
    align-self: stretch;
}
.drop::before {
    content: "";
    border: 3px solid transparent;
    border-top-color: #000;
    border-bottom: 0;
}
.drop.more {
    align-items: flex-end;
    padding-bottom: 6px;
}
.ribbon {
    height: 68px;
}
.ribbon .grip {
    height: 58px;
}
.feature {
    flex-direction: column;
    justify-content: flex-start;
    gap: 3px;
    width: 80px;
    height: 60px;
}
.split {
    display: flex;
    height: 64px;
}
.split .feature {
    width: 79px;
    height: auto;
    padding-top: 1px;
}
.split .drop {
    width: 11px;
    border-left: 1px solid #a8a8a8;
}

/* Selection bar */
.selectbar {
    flex: none;
    height: 31px;
    display: flex;
    align-items: center;
    padding: 0 0 2px 5px;
    border-top: 2px solid #969696;
    border-bottom: 1px solid #b0b0b0;
    background: linear-gradient(#cecece, #dcdcdc);
}
.picker {
    position: relative;
    flex: none;
    width: 151px;
    height: 20px;
    margin-right: 5px;
    border: 1px solid #666;
    border-radius: 3px;
    overflow: hidden;
}
.picker.filter {
    width: 143px;
    margin-right: 8px;
}
.picker select {
    appearance: none;
    display: block;
    width: 100%;
    height: 18px;
    padding: 0 1px;
    border: 0;
    border-radius: 0;
    background: linear-gradient(90deg, #5f9fe0, #d8efff) right / 16px 18px no-repeat #fff;
    font: inherit;
    color: #111;
}
.picker::after {
    content: "";
    position: absolute;
    right: 3px;
    top: 6px;
    border: 5px solid transparent;
    border-top: 6px solid #0a1420;
    border-bottom: 0;
    pointer-events: none;
}
.snap {
    width: 23px;
    height: 22px;
}
.snap.on {
    background: #fff;
    border: 1px solid #555;
    border-radius: 2px;
}
.prompt {
    flex: none;
    margin: 0;
    height: 22px;
    padding-left: 3px;
    border-top: 1px solid #f4f4f4;
    border-bottom: 2px solid #9a9a9a;
    background: #d9d9d9;
    font-size: 13px;
    font-weight: bold;
    line-height: 19px;
}

/* Work area */
.workspace {
    flex: 1;
    min-height: 0;
    display: grid;
    grid-template-columns: 33px 289px 1fr;
    grid-template-rows: 100%;
    position: relative;
}
.resource-bar {
    display: flex;
    flex-direction: column;
    align-items: flex-end;
    gap: 2px;
    padding-top: 17px;
    background: linear-gradient(90deg, #a2a2a2, #b4b4b4);
    overflow: hidden;
}
.tab {
    width: 27px;
    height: 40px;
    border: 1px solid #6c6c6c;
    border-right-color: #888;
    border-radius: 4px 0 0 4px;
    background: linear-gradient(90deg, #dedede, #c2c2c2);
}
.tab .icon {
    width: 22px;
}
.tab.current {
    width: 28px;
    height: 41px;
    border-right: 0;
    background: #ececec;
}
.tab.apart {
    margin-top: 12px;
}
.navigator {
    display: flex;
    flex-direction: column;
    padding: 0 9px 3px 8px;
    border-left: 1px solid #f8f8f8;
    border-right: 2px solid #777;
    background: #ebebeb;
    min-width: 0;
}
.navigator h2 {
    display: flex;
    align-items: center;
    gap: 12px;
    height: 31px;
    margin: 0;
    padding-left: 4px;
    font-size: 13px;
}
.tree {
    flex: 1;
    min-height: 0;
    display: flex;
    flex-direction: column;
    border: 1px solid #5c5c5c;
    background: #f0f0f0;
}
.tree-head {
    display: flex;
    height: 20px;
    border-bottom: 1px solid #909090;
    background: linear-gradient(#f6f6f6, #d4d6d8);
}
.tree-head button {
    justify-content: flex-start;
}
.tree-head .head-name {
    flex: 1;
    gap: 17px;
    padding-left: 7px;
    border-right: 1px solid #a0a0a0;
}
.tree-head .head-note {
    width: 28px;
    padding-left: 4px;
}
.sort {
    border: 5px solid transparent;
    border-bottom: 6px solid #111;
    border-top: 0;
}
.tree-body {
    flex: 1;
    min-height: 0;
    display: flex;
}
.tree-rows {
    flex: 1;
    overflow: hidden;
    background: #fff;
}
.tree table {
    width: 100%;
    border-collapse: collapse;
    table-layout: fixed;
}
.tree td {
    height: 20px;
    padding: 0;
    border-bottom: 1px solid #e2e2e2;
}
.tree tr:nth-child(even) {
    background: #f7f7f7;
}
.tree .note {
    width: 11px;
    border-left: 1px solid #e2e2e2;
}
.root {
    display: flex;
    align-items: center;
    height: 19px;
    padding-left: 5px;
}
.root .icon-16 {
    margin: 0 2px 0 6px;
}
.expander {
    width: 9px;
    height: 9px;
    border: 1px solid #999;
    border-radius: 1px;
}
.expander::before {
    content: "";
    width: 5px;
    height: 1px;
    background: #444;
}
.feature-row {
    display: flex;
    align-items: center;
    height: 19px;
    margin-left: 29px;
    border-left: 1px dotted #999;
    color: #333;
    white-space: nowrap;
}
.feature-row::before {
    content: "";
    width: 8px;
    border-top: 1px dotted #999;
}
.feature-row.faded {
    color: #a0a0a0;
}
.feature-row .icon-16 {
    margin: 0 2px;
}
.detail {
    margin-left: 4px;
    font-size: 13px;
}
.feature-row input {
    appearance: none;
    display: grid;
    place-items: center;
    flex: none;
    width: 12px;
    height: 12px;
    margin: 0 0 0 3px;
    border: 1px solid #000;
    background: #fff;
}
.feature-row input:checked::before {
    content: "";
    width: 10px;
    height: 10px;
    background: #00b81c;
    clip-path: polygon(0 45%, 22% 45%, 38% 62%, 80% 5%, 100% 5%, 100% 25%, 42% 98%, 30% 98%, 0 60%);
}

/* Scroll bars */
.scroll-v {
    width: 18px;
    padding-right: 2px;
    display: flex;
    flex-direction: column;
    align-items: center;
}
.scroll-v .thumb,
.scroll-h .thumb {
    border: 1px solid #8c8c8c;
    border-radius: 2px;
    background: linear-gradient(90deg, #f6f6f6, #c8c8cc);
    display: flex;
    align-items: center;
    justify-content: center;
}
.scroll-v .thumb {
    width: 15px;
    height: 214px;
    margin: 43px 0 auto;
}
.scroll-v .thumb::before {
    content: "";
    width: 7px;
    height: 8px;
    background: repeating-linear-gradient(#555 0 1px, transparent 1px 3px);
}
.scroll-h {
    display: flex;
    align-items: center;
    height: 17px;
    padding: 0 24px 0 7px;
}
.scroll-h .thumb {
    width: 155px;
    height: 15px;
    margin: 0 auto 0 8px;
    background: linear-gradient(#f6f6f6, #c8c8cc);
}
.scroll-h .thumb::before {
    content: "";
    width: 9px;
    height: 7px;
    background: repeating-linear-gradient(90deg, #555 0 1px, transparent 1px 3px);
}
.up,
.down,
.left,
.right {
    border: 4px solid transparent;
}
.up {
    margin-top: 6px;
    border-top: 0;
    border-bottom-color: #444;
}
.down {
    margin-bottom: 6px;
    border-bottom: 0;
    border-top-color: #444;
}
.left {
    border-left: 0;
    border-right-color: #333;
}
.right {
    border-right: 0;
    border-left-color: #333;
}

/* Graphics window */
.viewport {
    min-width: 0;
    background: linear-gradient(#96bcdb, #b5cde0 40%, #dfe2e4 75%, #e6e6e6 88%);
}
.model {
    display: block;
    width: 100%;
    height: 100%;
}
.axis-z {
    fill: #e4e4e4;
    font-size: 13px;
}
.axis-y {
    fill: #d89898;
    font-size: 13px;
}
.triad-z {
    fill: #3440f0;
    font-size: 12px;
}

/* Site mark laid over the panel and the graphics window */
.watermark {
    position: absolute;
    left: 254px;
    top: 59px;
    width: 320px;
    height: 170px;
    fill: #2893cc;
    opacity: .4;
    pointer-events: none;
}
.brand {
    font-family: "Noto Sans CJK SC", sans-serif;
    font-size: 58px;
    font-weight: bold;
}
.site {
    font-family: "Liberation Serif", serif;
    font-size: 15px;
    font-weight: bold;
    letter-spacing: 9px;
}
```
